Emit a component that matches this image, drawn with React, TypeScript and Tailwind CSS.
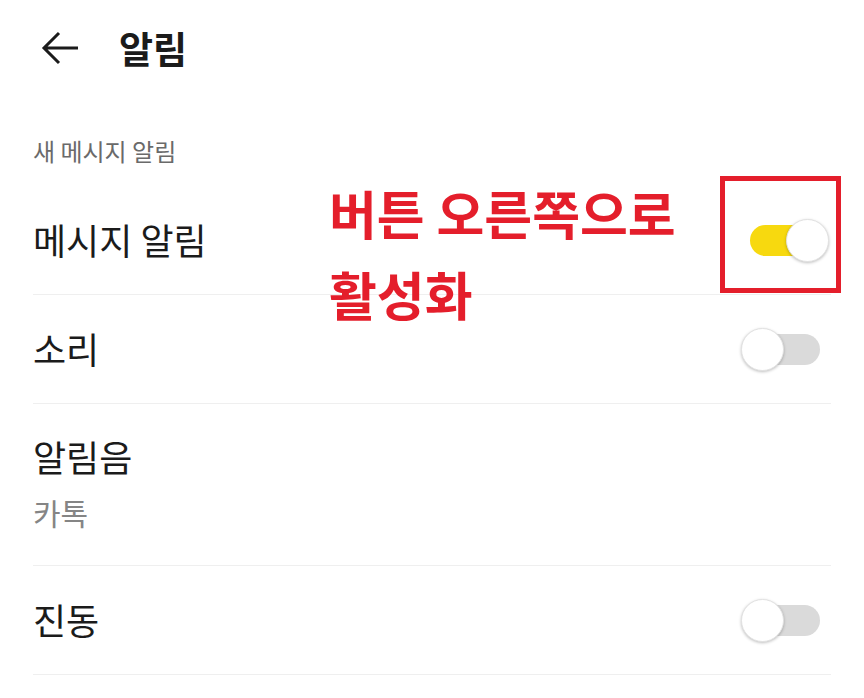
import React, { useState } from 'react';

const Toggle = ({ on, onChange }: { on: boolean; onChange: () => void }) => (
  <button
    type="button"
    onClick={onChange}
    className="relative mr-[2px] flex h-[44px] w-[88px] items-center justify-center"
    aria-pressed={on}
  >
    <span className={`h-[31px] w-[70px] rounded-full ${on ? 'bg-[#f7d90f]' : 'bg-[#dadada]'}`} />
    <span
      className={`absolute top-[0.5px] h-[43px] w-[43px] rounded-full border border-[#e2e2e2] bg-white shadow-[0_1px_3px_rgba(0,0,0,0.25)] ${
        on ? 'right-0' : 'left-0'
      }`}
    />
  </button>
);

export default function App() {
  const [message, setMessage] = useState(true);
  const [sound, setSound] = useState(false);
  const [vibrate, setVibrate] = useState(false);

  return (
    <div className="relative h-[698px] w-[864px] overflow-hidden bg-white font-['Noto_Sans_CJK_KR','Noto_Sans',sans-serif] text-[#1b1b1b]">
      {/* Header */}
      <div className="flex h-[96px] items-center pl-[40px]">
        <svg width="40" height="36" viewBox="0 0 40 36" fill="none" stroke="#1b1b1b" strokeWidth={3}>
          <path d="M38 18H4M19 3L4 18l15 15" strokeLinejoin="miter" />
        </svg>
        <h1 className="ml-[39px] text-[37px] font-bold leading-none">알림</h1>
      </div>

      <div className="px-[33px]">
        <div className="h-[88px] pt-[38px] text-[24px] leading-[1.4] text-[#6a6a6a]">새 메시지 알림</div>

        <div className="flex h-[111px] items-center justify-between border-b border-[#efefef] pt-[2px]">
          <span className="text-[36px] leading-[1.2]">메시지 알림</span>
          <Toggle on={message} onChange={() => setMessage(!message)} />
        </div>

        <div className="flex h-[109px] items-center justify-between border-b border-[#efefef]">
          <span className="text-[36px] leading-[1.2]">소리</span>
          <Toggle on={sound} onChange={() => setSound(!sound)} />
        </div>

        <div className="h-[162px] border-b border-[#efefef] pt-[31px]">
          <div className="text-[36px] leading-[1.2]">알림음</div>
          <div className="mt-[16px] text-[30px] leading-[1.2] text-[#858585]">카톡</div>
        </div>

        <div className="flex h-[109px] items-center justify-between border-b border-[#efefef]">
          <span className="text-[36px] leading-[1.2]">진동</span>
          <Toggle on={vibrate} onChange={() => setVibrate(!vibrate)} />
        </div>
      </div>

      {/* Annotation */}
      <div className="pointer-events-none absolute left-[720px] top-[176px] h-[117px] w-[121px] border-[5px] border-[#e41e2b]" />
      <div className="pointer-events-none absolute left-[329px] top-[172px] text-[52px] font-bold leading-[81px] text-[#e41e2b]">
        <div>버튼 오른쪽으로</div>
        <div>활성화</div>
      </div>
    </div>
  );
}
